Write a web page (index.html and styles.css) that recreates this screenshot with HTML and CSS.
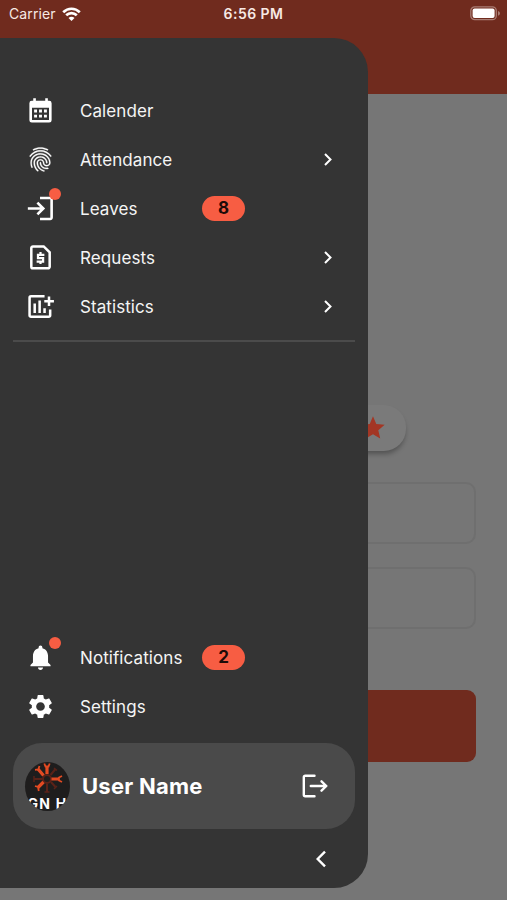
FILE: index.html
```html
<!DOCTYPE html>
<html lang="en">
<head>
<meta charset="utf-8">
<title>Menu</title>
<link rel="stylesheet" href="styles.css">
</head>
<body>
<div class="screen">
  <header class="appbar">
    <div class="status">
      <span class="carrier">Carrier
        <svg width="19" height="14" viewBox="0 0 19 14" fill="none" stroke="#fff" stroke-width="2.7"><path d="M1.2 5.2C6 .6 13 .6 17.8 5.2M4.2 8.3c3-2.9 7.600-2.900 10.600 0"/><path d="M9.500 14L6.500 10.900c1.700-1.500 4.300-1.500 6 0z" fill="#fff" stroke="none"/></svg>
      </span>
      <span class="clock">6:56 PM</span>
      <span class="battery">
        <svg width="31" height="15" viewBox="0 0 31 15"><rect x=".8" y=".8" width="25.500" height="12.900" rx="4" fill="none" stroke="#a87c73" stroke-width="1.300"/><rect x="2.600" y="2.600" width="22" height="9.400" rx="2" fill="#fff"/><path d="M28 5c2.700 1 2.700 3.700 0 4.700z" fill="#a87c73"/></svg>
      </span>
    </div>
  </header>
  <main class="page">
    <div class="rating">
      <svg width="28" height="28" viewBox="0 0 24 24" fill="#a33624"><path d="M12 17.270L18.180 21l-1.640-7.030L22 9.240l-7.190-.61L12 2 9.190 8.630 2 9.240l5.460 4.730L5.820 21z"/></svg>
    </div>
    <div class="field"></div>
    <div class="field"></div>
    <div class="submit"></div>
  </main>

  <nav class="drawer">
    <ul class="menu">
      <li class="item">
        <span class="icon"><svg viewBox="0 0 30 30" fill="#fff"><path fill-rule="evenodd" d="M6 5h1.500V2.300h2.700V5h9.700V2.300h2.700V5H24a2.500 2.500 0 0 1 2.500 2.500v17.500A2.500 2.500 0 0 1 24 27.500H6a2.500 2.500 0 0 1-2.500-2.500v-17.500A2.500 2.500 0 0 1 6 5zm.2 7.200v12.500h17.600V12.200z"/><path d="M8.400 14h3v3h-3zm5.100 0h3v3h-3zm5.100 0h3v3h-3zM8.400 19.300h3v3h-3zm5.100 0h3v3h-3zm5.100 0h3v3h-3z"/></svg></span>
        <span class="label">Calender</span>
      </li>
      <li class="item">
        <span class="icon"><svg viewBox="0 0 24 24" fill="#fff" stroke="#fff" stroke-width=".25"><path d="M17.810 4.470c-.08 0-.16-.02-.23-.06C15.660 3.420 14 3 12.010 3c-1.980 0-3.860.47-5.570 1.410-.24.13-.54.04-.68-.2-.13-.24-.04-.55.2-.68C7.820 2.520 9.860 2 12.010 2c2.130 0 3.990.47 6.030 1.520.25.13.34.43.21.67-.09.18-.26.28-.44.28zM3.500 9.720c-.1 0-.2-.03-.29-.09-.23-.16-.28-.47-.12-.7.99-1.400 2.250-2.500 3.750-3.270C9.980 4.040 14 4.030 17.150 5.650c1.500.77 2.760 1.860 3.750 3.250.16.22.11.54-.12.7-.23.16-.54.11-.7-.12-.9-1.260-2.040-2.250-3.390-2.940-2.870-1.470-6.540-1.470-9.400.01-1.360.7-2.500 1.700-3.400 2.960-.08.14-.23.21-.39.21zm6.250 12.070c-.13 0-.26-.05-.35-.15-.87-.87-1.340-1.430-2.010-2.640-.69-1.230-1.050-2.730-1.050-4.340 0-2.970 2.540-5.390 5.660-5.390s5.660 2.420 5.660 5.390c0 .28-.22.5-.5.5s-.5-.22-.5-.5c0-2.420-2.090-4.390-4.660-4.390-2.570 0-4.660 1.970-4.660 4.390 0 1.440.32 2.770.93 3.850.64 1.150 1.080 1.640 1.850 2.420.19.2.19.51 0 .71-.11.1-.24.15-.37.15zm7.170-1.850c-1.190 0-2.240-.3-3.100-.89-1.490-1.010-2.380-2.650-2.380-4.390 0-.28.22-.5.5-.5s.5.22.5.5c0 1.410.72 2.740 1.940 3.560.71.48 1.540.71 2.540.71.24 0 .64-.03 1.040-.1.27-.05.53.13.58.41.05.27-.13.53-.41.58-.57.11-1.070.12-1.210.12zM14.910 22c-.04 0-.09-.01-.13-.02-1.590-.44-2.630-1.030-3.720-2.100-1.400-1.390-2.170-3.240-2.170-5.220 0-1.620 1.380-2.940 3.080-2.940 1.700 0 3.080 1.320 3.080 2.940 0 1.070.93 1.940 2.080 1.940s2.080-.87 2.080-1.940c0-3.770-3.250-6.830-7.250-6.830-2.840 0-5.440 1.580-6.610 4.030-.39.81-.59 1.760-.59 2.800 0 .78.07 2.010.67 3.610.1.26-.03.55-.29.64-.26.1-.55-.04-.64-.29-.49-1.310-.73-2.610-.73-3.960 0-1.200.23-2.290.68-3.240 1.330-2.790 4.280-4.600 7.510-4.600 4.550 0 8.250 3.510 8.250 7.830 0 1.620-1.380 2.940-3.080 2.940s-3.080-1.320-3.080-2.940c0-1.070-.93-1.940-2.080-1.940s-2.080.87-2.080 1.940c0 1.710.66 3.310 1.870 4.510.95.94 1.860 1.460 3.270 1.850.27.07.42.35.35.61-.05.23-.26.38-.47.38z"/></svg></span>
        <span class="label">Attendance</span>
        <svg class="chevron" viewBox="0 0 8 13"><path d="M1 1l5.500 5.500L1 12"/></svg>
      </li>
      <li class="item">
        <span class="icon"><svg viewBox="0 0 30 30" fill="none" stroke="#fff" stroke-width="2.700"><path d="M1.900 15h15M11.800 8.900l6.100 6.100-6.100 6.100"/><path d="M14.500 4.200h10.500a1.500 1.500 0 0 1 1.500 1.500v18.600a1.500 1.500 0 0 1-1.500 1.500h-10.500"/></svg><i class="dot"></i></span>
        <span class="label">Leaves</span>
        <span class="count">8</span>
      </li>
      <li class="item">
        <span class="icon"><svg viewBox="0 0 30 30" fill="none" stroke="#fff" stroke-width="2.600"><path d="M7.200 3.500h11.100l6.200 6.200v14.800a1.700 1.700 0 0 1-1.700 1.700H7.200a1.700 1.700 0 0 1-1.700-1.700V5.200A1.700 1.700 0 0 1 7.200 3.500z"/><path stroke-width="2.300" d="M19 12.200h-6.600v3.500h5.300v3.500H11M15 9.400v2.800M15 19v2.800"/></svg></span>
        <span class="label">Requests</span>
        <svg class="chevron" viewBox="0 0 8 13"><path d="M1 1l5.500 5.500L1 12"/></svg>
      </li>
      <li class="item">
        <span class="icon"><svg viewBox="0 0 30 30" fill="none" stroke="#fff" stroke-width="2.600"><path d="M19.200 4.500H5.200a1.500 1.500 0 0 0-1.500 1.500v18.200a1.500 1.500 0 0 0 1.500 1.500h18.300a1.500 1.500 0 0 0 1.500-1.500v-6.200M9 12v9.800M14.100 8.900v12.900M19.200 16.700v5.100M23.800 4.700v9.700M18.900 9.600h10"/></svg></span>
        <span class="label">Statistics</span>
        <svg class="chevron" viewBox="0 0 8 13"><path d="M1 1l5.500 5.500L1 12"/></svg>
      </li>
    </ul>
    <hr class="rule">
    <ul class="menu menu-bottom">
      <li class="item">
        <span class="icon"><svg class="bell" viewBox="0 0 24 24" fill="#fff"><path d="M12 22c1.100 0 2-.9 2-2h-4c0 1.100.89 2 2 2zm6-6v-5c0-3.070-1.640-5.640-4.500-6.320V4c0-.83-.67-1.500-1.500-1.500s-1.500.67-1.500 1.500v.68C7.630 5.360 6 7.920 6 11v5l-2 2v1h16v-1l-2-2z"/></svg><i class="dot"></i></span>
        <span class="label">Notifications</span>
        <span class="count">2</span>
      </li>
      <li class="item">
        <span class="icon"><svg viewBox="0 0 24 24" fill="#fff"><path d="M19.140 12.940c.04-.3.06-.61.06-.94 0-.32-.02-.64-.07-.94l2.030-1.580c.18-.14.23-.41.12-.61l-1.920-3.320c-.12-.22-.37-.29-.59-.22l-2.390.96c-.5-.38-1.030-.7-1.620-.94l-.36-2.540c-.04-.24-.24-.41-.48-.41h-3.840c-.24 0-.43.17-.47.41l-.36 2.540c-.59.24-1.130.57-1.620.94l-2.390-.96c-.22-.08-.47 0-.59.22L2.740 8.870c-.12.21-.08.47.12.61l2.030 1.580c-.05.3-.09.63-.09.94s.02.64.07.94l-2.030 1.580c-.18.14-.23.41-.12.61l1.920 3.320c.12.22.37.29.59.22l2.390-.96c.5.38 1.030.7 1.620.94l.36 2.540c.05.24.24.41.48.41h3.840c.24 0 .44-.17.47-.41l.36-2.540c.59-.24 1.130-.56 1.620-.94l2.390.96c.22.08.47 0 .59-.22l1.920-3.320c.12-.22.07-.47-.12-.61l-2.010-1.580zM12 15.600c-1.980 0-3.600-1.620-3.600-3.600s1.620-3.600 3.600-3.600 3.600 1.620 3.600 3.600-1.620 3.600-3.600 3.600z"/></svg></span>
        <span class="label">Settings</span>
      </li>
    </ul>
    <section class="profile">
      <div class="avatar">
        <svg class="emblem" width="45" height="34" viewBox="0 0 45 34" fill="none">
          <g stroke="#5a2218" stroke-width="2"><path d="M25.500 13l5-6M26 20l4.500 5M22 22v8M17.500 17H9"/><circle cx="22" cy="17" r="4" stroke-width="2"/><path d="M29 6l3 2.500M29 27l3-3M19.500 30h5M9 14v6" stroke-width="1.500"/></g>
          <g stroke="#e34a22" stroke-width="3.200"><path d="M22 12V4M18.500 13.500L13 7M26.500 17H34M18.500 20L13 25.500"/></g>
          <g stroke="#e34a22" stroke-width="1.800"><path d="M19.300 1.500l1.200 3h3l1.200-3M10 7.800l3.200-.300 1.300-3.500M37 14l-3 1.500v3l3 1.500M10 24l3 1 .800 4"/></g>
        </svg>
        <span class="avatar-text">GN H</span>
      </div>
      <span class="name">User Name</span>
      <svg class="logout" width="28" height="26" viewBox="0 0 28 26" fill="none" stroke="#fff" stroke-width="2.400" stroke-linecap="round" stroke-linejoin="round"><path d="M13.500 2.800H4.200a1.400 1.400 0 0 0-1.400 1.400v17.600a1.400 1.400 0 0 0 1.400 1.400h9.300M9.800 13h15.500M20.500 8.300l4.800 4.700-4.800 4.700"/></svg>
    </section>
    <div class="collapse">
      <svg width="12" height="18" viewBox="0 0 12 18" fill="none" stroke="#fff" stroke-width="2.400"><path d="M10 1.700L2.700 9l7.300 7.300"/></svg>
    </div>
  </nav>
</div>
</body>
</html>
```
FILE: styles.css
```css
* { box-sizing: border-box; }
body { margin: 0; font-family: Inter, "Liberation Sans", sans-serif; }
.screen {
  position: relative;
  width: 507px;
  height: 900px;
  overflow: hidden;
  background: #767676;
}
.appbar { height: 94px; background: #702b1e; }
.status {
  display: grid;
  grid-template-columns: 1fr auto 1fr;
  align-items: center;
  height: 27px;
  padding: 0 6px 0 9px;
  color: #f7e9e5;
  font-size: 14px;
}
.carrier { display: flex; align-items: center; gap: 6px; letter-spacing: .1px; }
.clock { margin-left: -3px; font-weight: 600; letter-spacing: .45px; }
.battery { display: flex; justify-content: flex-end; }
.page { display: flex; flex-direction: column; padding: 311px 31px 0; }
.rating {
  display: flex;
  align-items: center;
  justify-content: flex-end;
  align-self: center;
  width: 304px;
  height: 46px;
  margin-bottom: 31px;
  padding-right: 19px;
  border-radius: 22px;
  background: #7a7a7a;
  box-shadow: 0 4px 5px -1px rgba(0, 0, 0, .3);
}
.field {
  height: 62px;
  margin-bottom: 23px;
  border: 2px solid #6f6f6f;
  border-radius: 10px;
}
.submit { height: 72px; margin-top: 38px; border-radius: 9px; background: #702b1e; }

.drawer {
  position: absolute;
  top: 38px;
  left: 0;
  display: flex;
  flex-direction: column;
  width: 368px;
  height: 850px;
  padding: 48px 13px 0;
  border-radius: 0 34px 34px 0;
  background: #343434;
}
.menu { margin: 0; padding: 0; list-style: none; }
.item {
  display: flex;
  align-items: center;
  height: 49px;
  padding: 0 23px 0 13px;
}
.icon { position: relative; display: flex; flex: none; width: 29px; height: 29px; margin-right: 25px; }
.icon svg { width: 100%; height: 100%; }
.icon .bell { transform: scale(1.040); }
.dot {
  position: absolute;
  top: -6px;
  right: -6px;
  width: 12px;
  height: 12px;
  border-radius: 50%;
  background: #f75d43;
}
.label { width: 122px; color: #f5f5f5; font-size: 17px; line-height: 22px; letter-spacing: .08px; }
.chevron { width: 8px; height: 13px; margin-left: auto; fill: none; stroke: #fff; stroke-width: 2; }
.count {
  width: 43px;
  height: 25px;
  border-radius: 13px;
  background: #f75d43;
  color: #1d0b08;
  font-size: 17px;
  font-weight: 700;
  line-height: 25px;
  text-align: center;
}
.rule { width: 100%; height: 2px; margin: 9px 0 0; border: 0; background: #4b4b4b; }
.menu-bottom { margin-top: auto; }
.profile {
  display: flex;
  align-items: center;
  height: 86px;
  margin-top: 12px;
  padding: 0 26px 0 12px;
  border-radius: 29px;
  background: #4a4a4a;
}
.avatar {
  display: flex;
  flex-direction: column;
  align-items: center;
  width: 45px;
  height: 49px;
  overflow: hidden;
  border-radius: 50%;
  background: #1e1d1d;
}
.emblem { flex: none; }
.avatar-text { color: #fff; font-size: 14px; font-weight: 700; line-height: 16px; white-space: pre; letter-spacing: 1.300px; }
.name { margin-left: 12px; color: #fff; font-size: 22px; font-weight: 700; letter-spacing: .25px; }
.logout { margin-left: auto; }
.collapse { display: flex; align-items: center; justify-content: flex-end; height: 59px; padding-right: 28px; }
```
